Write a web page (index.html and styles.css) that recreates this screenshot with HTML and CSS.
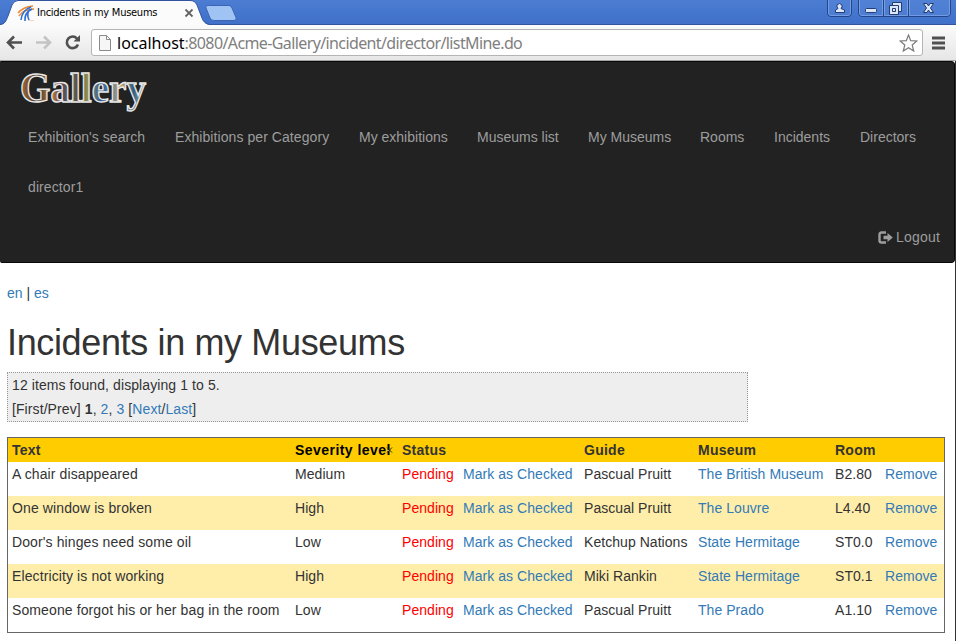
FILE: index.html
```
<!DOCTYPE html>
<html lang="en">
<head>
<meta charset="utf-8">
<title>Incidents in my Museums</title>
<link rel="stylesheet" href="styles.css">
</head>
<body>
<div class="tabstrip">
  <svg class="tabshape" width="260" height="25" viewBox="0 0 260 25">
    <path d="M0 25C5 24 6 21 8 16L12 5Q14 .5 18 .5H190Q195 .5 197 5L202 18Q204 24 210 25Z" fill="#fbfbfb"/>
    <path d="M0 24.500C5 24 6 21 8 16L12 5Q14 .5 18 .5H190Q195 .5 197 5L202 18Q204 24 210 24.500H260" fill="none" stroke="#31549c"/>
    <path d="M208.500 5.500H229Q231 5.500 232 8L236 17.500Q237 20.500 234 20.500H214Q211 20.500 210 18L206 8Q205 5.500 208.500 5.500Z" fill="#9fc3f2" stroke="#3c63b5"/>
    <g fill="none" stroke-width="1.600"><path d="M18 13Q23 7 33 6M19 16Q24 9 34 9" stroke="#f28a2e"/><path d="M21 20Q22 10 31 7M25 21Q24 13 32 9M29 20Q26 14 30 9" stroke="#2f72d8"/><path d="M28 20.500H34" stroke="#f8d4b6" stroke-width="1"/></g>
    <path d="M185.500 9.500L192.500 16.500M192.500 9.500L185.500 16.500" stroke="#646464" stroke-width="1.800"/>
  </svg>
  <span class="tabtitle">Incidents in my Museums</span>
  <svg class="winbtns" width="129" height="24" viewBox="0 0 129 24">
    <g fill="#5685d8" fill-opacity=".5" stroke="#23458c"><path d="M.5 0V13Q.5 16.500 4 16.500H21Q24.500 16.500 24.500 13V0"/><path d="M31.500 0V13Q31.500 16.500 35 16.500H119Q123.500 16.500 123.500 13V0M56.500 0V16M81.500 0V16"/></g>
    <path d="M1.500 0V13Q2 15.500 4 15.500H21Q23.500 15 23.500 13V0M32.500 0V13Q33 15.500 35 15.500H55.500V0M57.500 0V15.500H80.500V0M82.500 0V15.500H120Q122.500 15 122.500 13V0" fill="none" stroke="#86a9e5" stroke-opacity=".7"/>
    <g fill="#dbe6f8" stroke="#223c75"><path d="M8.500 12.500V10L11 8.500Q9.500 7 10 5Q12.500 2 15 5Q15.500 7 14 8.500L17.500 10V12.500Z"/><rect x="38.500" y="8.500" width="11" height="4" rx="1"/><path fill-rule="evenodd" d="M65.500 2.500H74.500V11.500H65.500Z"/><path fill-rule="evenodd" d="M62.500 5.500H71.500V14.500H62.500ZM65.500 8.500H68.500V11.500H65.500Z"/><path d="M96.500 3.500H100L101.500 6L103 3.500H106.500L103.500 8L106.500 12.500H103L101.500 10L100 12.500H96.500L99.500 8Z"/></g>
  </svg>
</div>
<div class="toolbar">
  <svg class="navicons" width="91" height="36" viewBox="0 0 91 36">
    <g fill="none" stroke-width="2.600"><path d="M8 17.500H22M14 11.500L8 17.500L14 23.500" stroke="#505050"/><path d="M36 17.500H50M44 11.500L50 17.500L44 23.500" stroke="#c4c4c4"/><path d="M77 13.500A5.800 5.800 0 1 0 78 19.500" stroke="#505050"/></g>
    <path d="M80 10V16.500H73.500Z" fill="#505050"/>
  </svg>
  <div class="address">
    <svg width="12" height="16" viewBox="0 0 12 16"><path d="M.5 .5H7.500L11.500 4.500V15.500H.5ZM7.500 .5V4.500H11.500" fill="#f6f6f6" stroke="#8a8a8a"/></svg>
    <span class="url"><b>localhost</b>:8080/Acme-Gallery/incident/director/listMine.do</span>
    <svg class="star" width="19" height="18" viewBox="0 0 19 18"><path d="M9.500 1L11.700 6.700L17.800 7L13.200 11L14.700 17L9.500 13.700L4.300 17L5.800 11L1.200 7L7.300 6.700Z" fill="#fff" stroke="#7b7b7b" stroke-width="1.200"/></svg>
  </div>
  <svg class="menu" width="13" height="14" viewBox="0 0 13 14"><path d="M0 2H13M0 7H13M0 12H13" stroke="#505050" stroke-width="3"/></svg>
</div>
<div class="viewport">
  <nav class="navbar">
    <svg class="logo" width="134" height="50" viewBox="0 0 134 50">
      <defs><linearGradient id="paint"><stop offset="0" stop-color="#a76a3d"/><stop offset=".15" stop-color="#3c3425"/><stop offset=".24" stop-color="#c78742"/><stop offset=".33" stop-color="#623b4d"/><stop offset=".4" stop-color="#4b7770"/><stop offset=".46" stop-color="#6b472f"/><stop offset=".54" stop-color="#8c9456"/><stop offset=".64" stop-color="#335d96"/><stop offset=".72" stop-color="#54799c"/><stop offset=".8" stop-color="#d0a96b"/><stop offset=".9" stop-color="#2f5d82"/><stop offset="1" stop-color="#c9cab9"/></linearGradient></defs>
      <text x="5" y="39.500" textLength="126" lengthAdjust="spacingAndGlyphs">Gallery</text>
    </svg>
    <ul class="links">
      <li class="n1">Exhibition's search</li><li class="n2">Exhibitions per Category</li><li class="n3">My exhibitions</li><li class="n4">Museums list</li><li class="n5">My Museums</li><li class="n6">Rooms</li><li class="n7">Incidents</li><li class="n8">Directors</li><li class="n9">director1</li>
    </ul>
    <div class="logout"><svg width="15" height="13" viewBox="0 0 15 13"><path d="M8 1.500H3.500Q1.500 1.500 1.500 3.500V9.500Q1.500 11.500 3.500 11.500H8" fill="none" stroke="#9d9d9d" stroke-width="2.400"/><path d="M5.500 4.800H9.500V2L14.800 6.500L9.500 11V8.200H5.500Z" fill="#9d9d9d"/></svg><span>Logout</span></div>
  </nav>
  <main>
    <p class="lang"><a>en</a> | <a>es</a></p>
    <h1>Incidents in my Museums</h1>
    <div class="banner"><div class="found">12 items found, displaying 1 to 5.</div><div class="pages">[First/Prev] <b>1</b>, <a>2</a>, <a>3</a> [<a>Next</a>/<a>Last</a>]</div></div>
    <table>
      <colgroup><col class="c1"><col class="c2"><col class="c3"><col class="c4"><col class="c5"><col class="c6"><col class="c7"><col class="c8"></colgroup>
      <thead><tr><th>Text</th><th class="sort">Severity level<svg width="7" height="9" viewBox="0 0 7 9"><path d="M1 1.500L6 6.500M6 1.500L1 6.500" stroke="#27230f" fill="none"/><path d="M1 4.500H3" stroke="#fff" stroke-opacity=".6"/></svg></th><th>Status</th><th></th><th>Guide</th><th>Museum</th><th>Room</th><th></th></tr></thead>
      <tbody>
        <tr><td>A chair disappeared</td><td>Medium</td><td class="red">Pending</td><td><a>Mark as Checked</a></td><td>Pascual Pruitt</td><td><a>The British Museum</a></td><td>B2.80</td><td><a>Remove</a></td></tr>
        <tr><td>One window is broken</td><td>High</td><td class="red">Pending</td><td><a>Mark as Checked</a></td><td>Pascual Pruitt</td><td><a>The Louvre</a></td><td>L4.40</td><td><a>Remove</a></td></tr>
        <tr><td>Door's hinges need some oil</td><td>Low</td><td class="red">Pending</td><td><a>Mark as Checked</a></td><td>Ketchup Nations</td><td><a>State Hermitage</a></td><td>ST0.0</td><td><a>Remove</a></td></tr>
        <tr><td>Electricity is not working</td><td>High</td><td class="red">Pending</td><td><a>Mark as Checked</a></td><td>Miki Rankin</td><td><a>State Hermitage</a></td><td>ST0.1</td><td><a>Remove</a></td></tr>
        <tr><td>Someone forgot his or her bag in the room</td><td>Low</td><td class="red">Pending</td><td><a>Mark as Checked</a></td><td>Pascual Pruitt</td><td><a>The Prado</a></td><td>A1.10</td><td><a>Remove</a></td></tr>
      </tbody>
    </table>
  </main>
</div>
</body>
</html>
```
FILE: styles.css
```
* { box-sizing: border-box; }
body { margin: 0; width: 956px; height: 641px; overflow: hidden; background: #fff; color: #333; font: 14px/20px "Liberation Sans", Arial, sans-serif; }
svg { display: block; flex: none; }
a { color: #337ab7; }

.tabstrip { height: 25px; display: flex; position: relative; background: linear-gradient(#4c7dd3, #4070c8 24px, #31549c 24px); }
.tabtitle { position: absolute; left: 37px; top: 4px; font: 11px/18px "DejaVu Sans Condensed", "DejaVu Sans", sans-serif; letter-spacing: -.26px; color: #000; white-space: nowrap; }
.winbtns { margin-left: auto; }

.toolbar { height: 36px; display: flex; align-items: flex-start; background: linear-gradient(#fbfbfb, #e6e6e6); border-bottom: 1px solid #a4a8a4; }
.address { width: 832px; height: 27px; margin-top: 4px; display: flex; align-items: center; padding: 0 4px 0 7px; background: #fff; border: 1px solid #b4b4b4; border-radius: 3px; }
.url { margin-left: 6px; font: 16px/22px "Noto Sans", sans-serif; letter-spacing: -.61px; color: #808080; white-space: nowrap; }
.url b { font-weight: 400; letter-spacing: 0; color: #000; }
.star { margin-left: auto; }
.menu { margin: 11px 0 0 9px; }

.viewport { height: 580px; border-right: 1px solid #333; }
.navbar { height: 202px; background: #222; border: 1px solid #080808; border-left-color: #222; border-radius: 0 4px 4px 2px; color: #9d9d9d; }
.logo { margin-left: 14px; overflow: visible; }
.logo text { font: bold 42px "Liberation Serif", serif; fill: url(#paint); stroke: #e8e8e8; stroke-width: 1.400px; }
.links { display: flex; flex-wrap: wrap; list-style: none; margin: 0; padding: 0 0 0 12px; }
.links li { padding: 15px; height: 50px; white-space: nowrap; }
.n1 { width: 147px; letter-spacing: .04px; }
.n2 { width: 184px; letter-spacing: .07px; }
.n3 { width: 118px; }
.n4 { width: 111px; }
.n5 { width: 112px; }
.n6 { width: 74px; }
.n7 { width: 86px; }
.n9 { letter-spacing: .1px; }
.logout { display: flex; justify-content: flex-end; align-items: center; height: 50px; padding-right: 14px; gap: 3px; letter-spacing: .2px; }

main { padding: 20px 0 0 7px; }
.lang { margin: 0 0 20px; }
h1 { font-size: 36px; line-height: 40px; font-weight: 400; letter-spacing: -.36px; margin: 0 0 9px; }
.banner { width: 741px; height: 50px; padding: 0 4px; background: #eee; border: 1px dotted #999; line-height: 24px; letter-spacing: .09px; }

table { width: 938px; margin-top: 15px; table-layout: fixed; border-collapse: separate; border-spacing: 0; border: 1px solid #666; }
.c1 { width: 283px; } .c2 { width: 107px; } .c3 { width: 61px; } .c4 { width: 121px; }
.c5 { width: 114px; } .c6 { width: 137px; } .c7 { width: 50px; } .c8 { width: 63px; }
th, td { text-align: left; vertical-align: top; padding: 2px 0 2px 4px; white-space: nowrap; }
th { height: 24px; background: #fc0; letter-spacing: .25px; }
td { height: 34px; letter-spacing: .05px; }
td:first-child { letter-spacing: .11px; }
tbody tr:nth-child(even) { background: #fea; }
.red { color: #f00; }
.sort { color: #000; letter-spacing: .45px; }
.sort svg { display: inline-block; margin-left: -5px; }
```
